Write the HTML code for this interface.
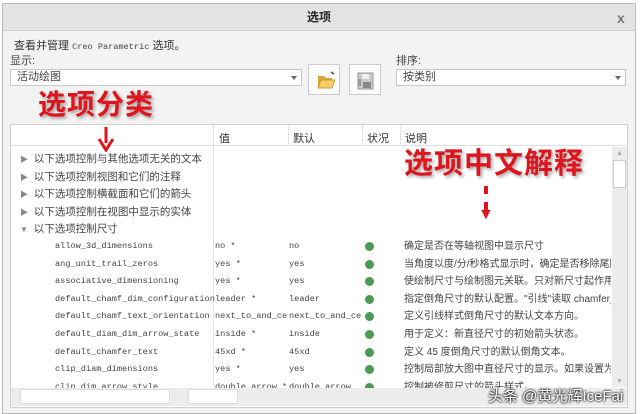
<!DOCTYPE html>
<html><head><meta charset="utf-8"><style>
*{margin:0;padding:0;box-sizing:border-box}
body{width:640px;height:414px;background:#fff;position:relative;overflow:hidden;font-family:"Liberation Sans","Noto Sans CJK SC",sans-serif;font-size:11px;color:#333}
.a{position:absolute}
.dlg{left:2px;top:3px;width:634px;height:411px;background:#f3f3f3;border:1px solid #bbb}
.title{left:3px;top:4px;width:632px;height:27px;background:#e3e3e3;border-bottom:1px solid #d0d0d0;text-align:center;font-weight:bold;font-size:12px;line-height:27px;color:#222}
.combo{background:#fff;border:1px solid #c8c8c8;height:17px;line-height:15px;padding-left:6px;font-size:11px;color:#444}
.dd{position:absolute;right:4px;top:6px;width:0;height:0;border-left:3px solid transparent;border-right:3px solid transparent;border-top:4px solid #666}
.btn{background:#fbfbfb;border:1px solid #ccc;width:32px;height:31px}
.mono{font-family:"Liberation Mono",monospace;font-size:8.6px;color:#444}
.dot{width:9px;height:9px;border-radius:50%;background:#4c9a52}
.red{color:#e0141c;font-weight:bold;text-shadow:2px 2px 3px rgba(0,0,0,.35)}
.r{position:absolute;left:0;height:17px;line-height:17px;white-space:nowrap;font-size:10px;color:#444}
.r span{position:absolute;top:0;overflow:hidden}
</style></head><body>
<div class="a dlg"></div>
<div class="a title">选项</div>
<div class="a" style="left:617px;top:10px;font-size:14px;color:#777;font-weight:bold">x</div>
<div class="a" style="left:14px;top:37px;font-size:11px;color:#333">查看并管理 <span class="mono">Creo Parametric</span> 选项。</div>
<div class="a" style="left:10px;top:52px;color:#444">显示:</div>
<div class="a combo" style="left:10px;top:69px;width:292px">活动绘图<div class="dd"></div></div>
<div class="a btn" style="left:308px;top:64px"><svg width="30" height="29"><path d="M9 11h6l2 2h6v10H9z" fill="#d9a63a"/><path d="M9 23l3-8h14l-3 8z" fill="#f3cf6a" stroke="#c08a20" stroke-width=".7"/><path d="M22 7l3 2" stroke="#444" stroke-width="1.5"/></svg></div>
<div class="a btn" style="left:349px;top:64px"><svg width="30" height="29"><rect x="8" y="8" width="15" height="16" fill="#c9c9c9" stroke="#999"/><rect x="12" y="9" width="7" height="5" fill="#eee"/><rect x="13" y="17" width="8" height="6" fill="#888"/><rect x="8" y="14" width="3" height="7" fill="#999"/></svg></div>
<div class="a" style="left:396px;top:52px;color:#444">排序:</div>
<div class="a combo" style="left:396px;top:69px;width:230px">按类别<div class="dd"></div></div>
<div class="a red" style="left:38px;top:88px;font-size:28px;line-height:34px;letter-spacing:1px">选项分类</div>
<div class="a" style="left:10px;top:124px;width:618px;height:284px;background:#fff;border:1px solid #cfcfcf"></div>
<div class="a" style="left:11px;top:125px;width:616px;height:21px;background:#fff;border-bottom:1px solid #e0e0e0"></div>
<div class="a" style="left:213px;top:125px;width:1px;height:262px;background:#e3e3e3"></div>
<div class="a" style="left:288px;top:125px;width:1px;height:20px;background:#e3e3e3"></div>
<div class="a" style="left:362px;top:125px;width:1px;height:20px;background:#e3e3e3"></div>
<div class="a" style="left:400px;top:125px;width:1px;height:20px;background:#e3e3e3"></div>
<div class="a" style="left:219px;top:130px">值</div>
<div class="a" style="left:293px;top:130px">默认</div>
<div class="a" style="left:367px;top:130px">状况</div>
<div class="a" style="left:405px;top:130px">说明</div>
<svg class="a" style="left:96px;top:126px" width="20" height="26"><path d="M10 1v16" stroke="#e0141c" stroke-width="3"/><path d="M3 13l7 11 7-11" fill="none" stroke="#e0141c" stroke-width="3"/></svg>
<div class="a" style="left:612px;top:147px;width:15px;height:240px;background:#ececec"></div>
<div class="a" style="left:613px;top:160px;width:13px;height:28px;background:#fff;border:1px solid #ccc"></div>
<div class="a" style="left:616px;top:150px;font-size:7px;color:#aaa">▲</div>
<div class="a" style="left:616px;top:378px;font-size:7px;color:#aaa">▼</div>
<div class="a" style="left:11px;top:388px;width:616px;height:18px;background:#ececec"></div>
<div class="a" style="left:20px;top:389px;width:150px;height:15px;background:#fff;border:1px solid #ddd"></div>
<div class="a" style="left:188px;top:389px;width:50px;height:15px;background:#fff;border:1px solid #ddd"></div>
<div class="a red" style="left:404px;top:146px;font-size:29px;line-height:36px;letter-spacing:1px">选项中文解释</div>
<div class="a" style="left:484px;top:186px;width:4px;height:24px;border-left:4px dashed #e0141c"></div>
<div class="a" style="left:478px;top:206px;color:#e0141c;font-size:16px">▼</div>
<div class="a" style="left:20px;top:151px;line-height:17.6px;color:#444;font-size:10.5px">
<div><span style="color:#888;font-size:8px">▶</span>&nbsp; 以下选项控制与其他选项无关的文本</div>
<div><span style="color:#888;font-size:8px">▶</span>&nbsp; 以下选项控制视图和它们的注释</div>
<div><span style="color:#888;font-size:8px">▶</span>&nbsp; 以下选项控制横截面和它们的箭头</div>
<div><span style="color:#888;font-size:8px">▶</span>&nbsp; 以下选项控制在视图中显示的实体</div>
<div><span style="color:#888;font-size:8px">▼</span>&nbsp; 以下选项控制尺寸</div>
</div>
<div class="a" style="left:0;top:238px;width:611px;height:150px;overflow:hidden">
<div class="r" style="top:0"><span class="mono" style="left:55px">allow_3d_dimensions</span><span class="mono" style="left:215px">no *</span><span class="mono" style="left:289px">no</span><span style="left:365px;top:4px" class="dot"></span><span style="left:404px">确定是否在等轴视图中显示尺寸</span></div>
<div class="r" style="top:17.6px"><span class="mono" style="left:55px">ang_unit_trail_zeros</span><span class="mono" style="left:215px">yes *</span><span class="mono" style="left:289px">yes</span><span style="left:365px;top:4px" class="dot"></span><span style="left:404px">当角度以度/分/秒格式显示时，确定是否移除尾随</span></div>
<div class="r" style="top:35.2px"><span class="mono" style="left:55px">associative_dimensioning</span><span class="mono" style="left:215px">yes *</span><span class="mono" style="left:289px">yes</span><span style="left:365px;top:4px" class="dot"></span><span style="left:404px">使绘制尺寸与绘制图元关联。只对新尺寸起作用。</span></div>
<div class="r" style="top:52.8px"><span class="mono" style="left:55px">default_chamf_dim_configuration</span><span class="mono" style="left:215px">leader *</span><span class="mono" style="left:289px">leader</span><span style="left:365px;top:4px" class="dot"></span><span style="left:404px">指定倒角尺寸的默认配置。"引线"读取 chamfer_l</span></div>
<div class="r" style="top:70.4px"><span class="mono" style="left:55px">default_chamf_text_orientation</span><span class="mono" style="left:215px;width:72px">next_to_and_cen</span><span class="mono" style="left:289px;width:72px">next_to_and_cen</span><span style="left:365px;top:4px" class="dot"></span><span style="left:404px">定义引线样式倒角尺寸的默认文本方向。</span></div>
<div class="r" style="top:88px"><span class="mono" style="left:55px">default_diam_dim_arrow_state</span><span class="mono" style="left:215px">inside *</span><span class="mono" style="left:289px">inside</span><span style="left:365px;top:4px" class="dot"></span><span style="left:404px">用于定义：新直径尺寸的初始箭头状态。</span></div>
<div class="r" style="top:105.6px"><span class="mono" style="left:55px">default_chamfer_text</span><span class="mono" style="left:215px">45xd *</span><span class="mono" style="left:289px">45xd</span><span style="left:365px;top:4px" class="dot"></span><span style="left:404px">定义 45 度倒角尺寸的默认倒角文本。</span></div>
<div class="r" style="top:123.2px"><span class="mono" style="left:55px">clip_diam_dimensions</span><span class="mono" style="left:215px">yes *</span><span class="mono" style="left:289px">yes</span><span style="left:365px;top:4px" class="dot"></span><span style="left:404px">控制局部放大图中直径尺寸的显示。如果设置为"是</span></div>
<div class="r" style="top:140.8px"><span class="mono" style="left:55px">clip_dim_arrow_style</span><span class="mono" style="left:215px;width:72px">double_arrow *</span><span class="mono" style="left:289px;width:72px">double_arrow</span><span style="left:365px;top:4px" class="dot"></span><span style="left:404px">控制被修剪尺寸的箭头样式。</span></div>
</div>
<div class="a" style="left:488px;top:385px;font-size:15px;color:#fff;text-shadow:0 0 2px #000,0 0 2px #000">头条 @黄光辉IceFai</div>
</body></html>
